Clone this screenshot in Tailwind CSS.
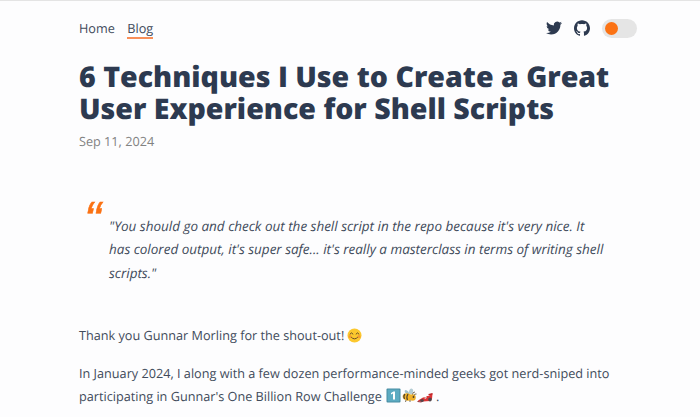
<!DOCTYPE html>
<html lang="en">
<head>
<meta charset="utf-8">
<title>6 Techniques I Use to Create a Great User Experience for Shell Scripts</title>
<script src="https://cdn.jsdelivr.net/npm/@tailwindcss/browser@4"></script>
</head>
<body class="h-[417px] overflow-hidden border-t border-[#e4e4e4] bg-[#fdfdfe] font-['Open_Sans','Noto_Sans',sans-serif] text-[12.68px] text-[#414b5b] [text-rendering:geometricPrecision]">
<div class="ml-[79px] w-[558px]">
  <header class="flex h-[54px] items-center justify-between">
    <nav class="flex gap-[12.5px] leading-[18px]">
      <a>Home</a>
      <a class="flex flex-col">Blog<span class="-mb-0.5 h-0.5 bg-[#f98f58]"></span></a>
    </nav>
    <div class="flex items-center">
      <svg class="h-4 w-4" viewBox="0 0 24 24" fill="#2d3a50"><path d="M23.953 4.57a10 10 0 01-2.825.775 4.958 4.958 0 002.163-2.723c-.951.555-2.005.959-3.127 1.184a4.92 4.92 0 00-8.384 4.482C7.69 8.095 4.067 6.13 1.64 3.162a4.822 4.822 0 00-.666 2.475c0 1.71.87 3.213 2.188 4.096a4.904 4.904 0 01-2.228-.616v.06a4.923 4.923 0 003.946 4.827 4.996 4.996 0 01-2.212.085 4.936 4.936 0 004.604 3.417 9.867 9.867 0 01-6.102 2.105c-.39 0-.779-.023-1.17-.067a13.995 13.995 0 007.557 2.209c9.053 0 13.998-7.496 13.998-13.985 0-.21 0-.42-.015-.63A9.935 9.935 0 0024 4.59z"/></svg>
      <svg class="ml-3 h-4 w-4" viewBox="0 0 24 24" fill="#2d3a50"><path d="M12 .297c-6.63 0-12 5.373-12 12 0 5.303 3.438 9.8 8.205 11.385.6.113.82-.258.82-.577 0-.285-.01-1.04-.015-2.04-3.338.724-4.042-1.61-4.042-1.61C4.422 18.07 3.633 17.7 3.633 17.7c-1.087-.744.084-.729.084-.729 1.205.084 1.838 1.236 1.838 1.236 1.07 1.835 2.809 1.305 3.495.998.108-.776.417-1.305.76-1.605-2.665-.3-5.466-1.332-5.466-5.93 0-1.31.465-2.38 1.235-3.22-.135-.303-.54-1.523.105-3.176 0 0 1.005-.322 3.3 1.23.96-.267 1.98-.399 3-.405 1.02.006 2.04.138 3 .405 2.28-1.552 3.285-1.23 3.285-1.23.645 1.653.24 2.873.12 3.176.765.84 1.23 1.91 1.23 3.22 0 4.61-2.805 5.625-5.475 5.92.42.36.81 1.096.81 2.22 0 1.606-.015 2.896-.015 3.286 0 .315.21.69.825.57C20.565 22.092 24 17.592 24 12.297c0-6.627-5.373-12-12-12"/></svg>
      <div class="ml-3 flex h-[19px] w-[35px] items-center rounded-full bg-[#e5e5e5] pl-[3px]"><div class="h-[13px] w-[13px] rounded-full bg-[#fb7214]"></div></div>
    </div>
  </header>
  <h1 class="mt-[6px] text-[28.55px] leading-[31.6px] font-extrabold whitespace-nowrap text-[#2d3a50]">6 Techniques I Use to Create a Great<br>User Experience for Shell Scripts</h1>
  <p class="mt-[7.2px] leading-5 text-[#828282]">Sep 11, 2024</p>
  <blockquote class="relative mt-[63.3px] pl-[30px] text-[13.47px] leading-[23.6px] whitespace-nowrap italic">
    <span class="absolute top-[-21px] left-[5px] font-['Liberation_Sans'] text-[51px] leading-[51px] text-[#fb7214] [-webkit-text-stroke:0.5px_#fb7214]">“</span>
    <p>"You should go and check out the shell script in the repo because it's very nice. It<br>has colored output, it's super safe... it's really a masterclass in terms of writing shell<br>scripts."</p>
  </blockquote>
  <p class="mt-[39px] flex items-center leading-[23px]">Thank you Gunnar Morling for the shout-out!
    <svg class="ml-[3px] h-[15px] w-[15px]" viewBox="0 0 30 30"><circle cx="15" cy="15" r="14" fill="#fcc82e"/><g fill="none" stroke="#694c28" stroke-width="2" stroke-linecap="round"><path d="M6 12q3-5 6 0M18 12q3-5 6 0M8 18q7 8 14 0"/></g><circle cx="6" cy="17" r="3" fill="#f59932"/><circle cx="24" cy="17" r="3" fill="#f59932"/></svg>
  </p>
  <div class="mt-[15px] leading-[22.2px] whitespace-nowrap">
    <p>In January 2024, I along with a few dozen performance-minded geeks got nerd-sniped into</p>
    <p class="flex items-center">participating in Gunnar's One Billion Row Challenge
      <svg class="ml-1 h-[15px] w-[15px]" viewBox="0 0 30 30"><rect x="1" y="1" width="28" height="28" rx="2" fill="#498da3"/><rect x="3" y="3" width="24" height="24" rx="2" fill="#5cabc2"/><path d="M10 10l5-3h3v16h-4V11l-4 2z" fill="#fff"/></svg>
      <svg class="h-[15px] w-[16px]" viewBox="0 0 32 30"><ellipse cx="12" cy="9" rx="3" ry="6" transform="rotate(-40 12 9)" fill="#a1bfc9"/><ellipse cx="20" cy="7" rx="4" ry="6" transform="rotate(20 20 7)" fill="#b4cdd4"/><ellipse cx="13" cy="18" rx="10" ry="7" transform="rotate(15 13 18)" fill="#f6b526"/><path d="M8 12q-4 4-1 10M14 12q-4 6-1 12" fill="none" stroke="#54452e" stroke-width="2.5"/><circle cx="23" cy="19" r="6.5" fill="#eeb02a"/><circle cx="25" cy="18" r="1.8" fill="#45382b"/><path d="M23 13q0-5 5-5M26 15q1-4 5-3M10 24l-1 4M18 24v4" fill="none" stroke="#54452e" stroke-width="1.5"/></svg>
      <svg class="h-[15px] w-[16px]" viewBox="0 0 32 30"><path d="M2 25l10-6 6-1 2-2 4 0 3-4 4-1-1 11-4 4-14 1-9-1z" fill="#dc3435"/><path d="M23 12l8-2v3l-8 2z" fill="#bd2529"/><ellipse cx="10" cy="25" rx="3.5" ry="3" fill="#51454b"/><ellipse cx="26" cy="23" rx="3.5" ry="4" fill="#51454b"/><path d="M14 20l4-2 2 1-3 3z" fill="#d9d1d0"/><path d="M1 27l8 1" stroke="#8f272b" stroke-width="2"/></svg>
      <span class="ml-[3px]">.</span>
    </p>
  </div>
</div>
</body>
</html>
